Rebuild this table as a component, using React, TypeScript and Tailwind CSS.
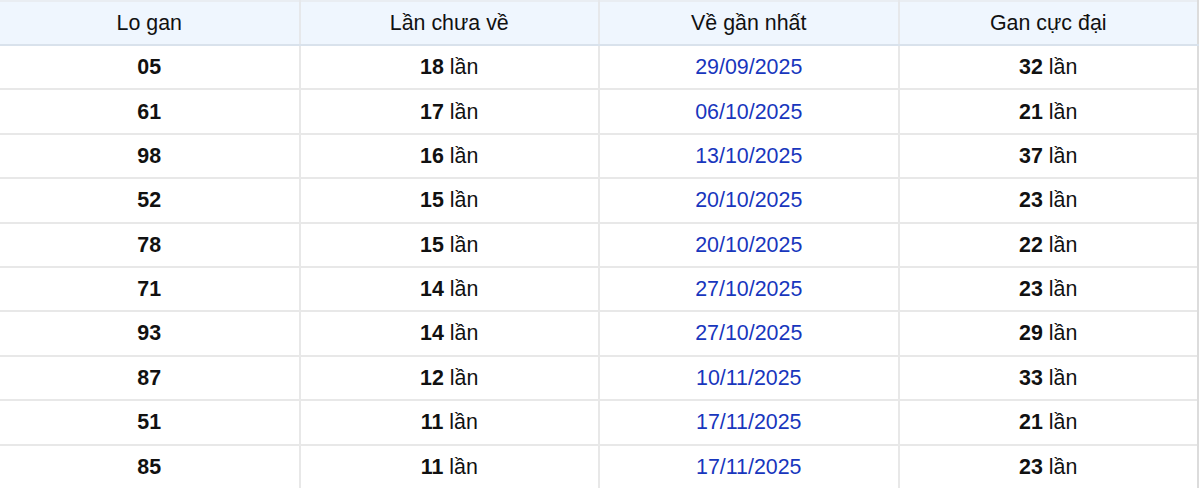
import React from "react";

const rows: [string, number, string, number][] = [
  ["05", 18, "29/09/2025", 32],
  ["61", 17, "06/10/2025", 21],
  ["98", 16, "13/10/2025", 37],
  ["52", 15, "20/10/2025", 23],
  ["78", 15, "20/10/2025", 22],
  ["71", 14, "27/10/2025", 23],
  ["93", 14, "27/10/2025", 29],
  ["87", 12, "10/11/2025", 33],
  ["51", 11, "17/11/2025", 21],
  ["85", 11, "17/11/2025", 23],
];

const App: React.FC = () => {
  return (
    <div
      className="w-[1200px] h-[488px] overflow-hidden bg-white text-[21.4px] text-[#111]"
      style={{ fontFamily: '"Liberation Sans", Arial, sans-serif' }}
    >
      <table className="w-[1199px] table-fixed border-collapse">
        <thead>
          <tr className="h-[44px] bg-[#eff6fe] border-t-2 border-[#e9edf2]">
            {["Lo gan", "Lần chưa về", "Về gần nhất", "Gan cực đại"].map((h) => (
              <th
                key={h}
                className="font-normal text-center border-r-2 border-b-2 border-r-[#e6e8eb] border-b-[#d9e2ec] last:border-r-[#dcdcdc]"
              >
                {h}
              </th>
            ))}
          </tr>
        </thead>
        <tbody>
          {rows.map(([lo, chua, ngay, max]) => (
            <tr key={lo} className="h-[44.4px] border-b-2 border-[#e8e8e8]">
              <td className="text-center font-bold border-r-2 border-[#e8e8e8]">{lo}</td>
              <td className="text-center border-r-2 border-[#e8e8e8]">
                <span className="font-bold">{chua}</span> lần
              </td>
              <td className="text-center text-[#1836bd] border-r-2 border-[#e8e8e8]">{ngay}</td>
              <td className="text-center border-r-2 border-[#dcdcdc]">
                <span className="font-bold">{max}</span> lần
              </td>
            </tr>
          ))}
        </tbody>
      </table>
    </div>
  );
};

export default App;
